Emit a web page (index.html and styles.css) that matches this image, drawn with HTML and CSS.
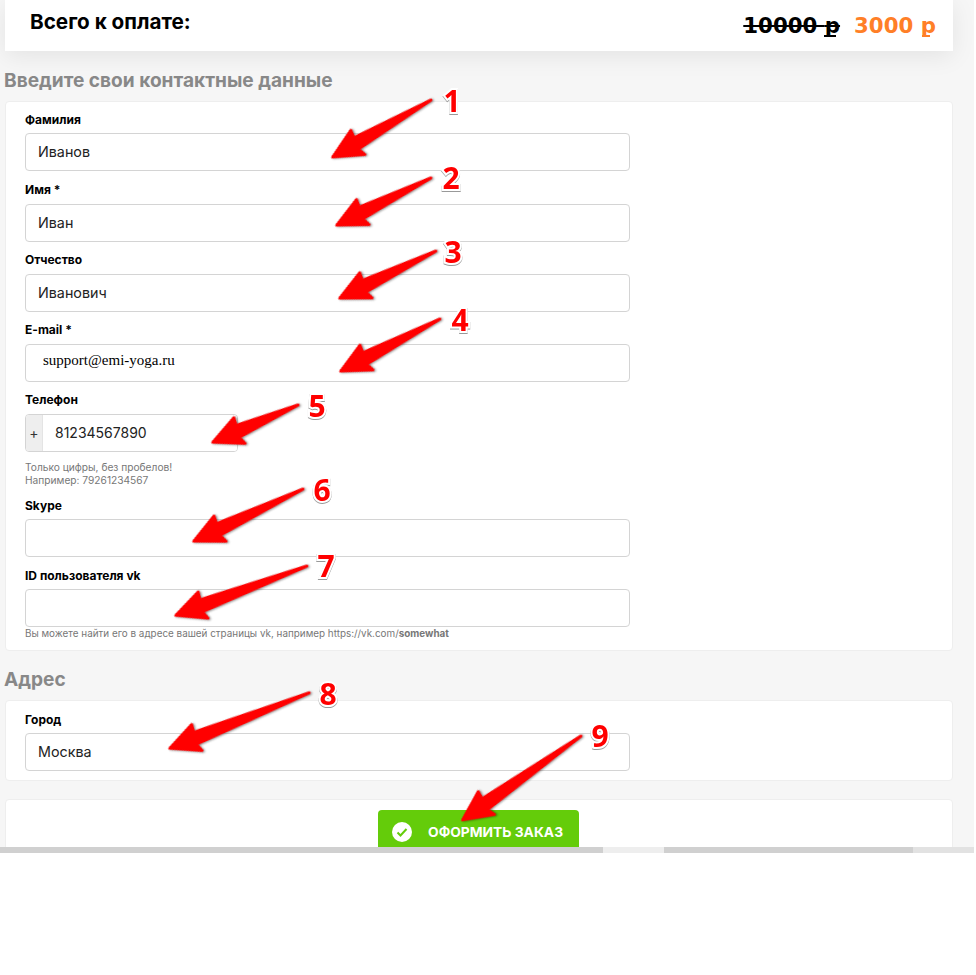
FILE: index.html
```html
<!DOCTYPE html>
<html>
<head lang="ru">
    <meta charset="UTF-8">
    <title>Оформление заказа</title>
    <link rel="stylesheet" href="styles.css">
</head>
<body>
<div class="page">
    <div class="total">
        <div class="total-title">Всего к оплате:</div>
        <div class="total-prices">
            <span class="price-old">10000 <span class="rub">р</span></span>
            <span class="price-new">3000 <span class="rub">р</span></span>
        </div>
    </div>

    <h2 class="section-title">Введите свои контактные данные</h2>
    <div class="card contacts">
        <div class="field">
            <label class="field-label">Фамилия</label>
            <input class="field-input" type="text" value="Иванов">
        </div>
        <div class="field field-tall">
            <label class="field-label">Имя *</label>
            <input class="field-input" type="text" value="Иван">
        </div>
        <div class="field field-tall">
            <label class="field-label">Отчество</label>
            <input class="field-input" type="text" value="Иванович">
        </div>
        <div class="field field-tall">
            <label class="field-label">E-mail *</label>
            <input class="field-input field-input-email" type="text" value="support@emi-yoga.ru">
        </div>
        <div class="field field-tall">
            <label class="field-label">Телефон</label>
            <div class="phone">
                <span class="phone-plus">+</span>
                <input class="phone-input" type="text" value="81234567890">
            </div>
            <p class="hint hint-phone">Только цифры, без пробелов!<br>Например: 79261234567</p>
        </div>
        <div class="field">
            <label class="field-label">Skype</label>
            <input class="field-input" type="text">
        </div>
        <div class="field">
            <label class="field-label">ID пользователя vk</label>
            <input class="field-input" type="text">
            <p class="hint">Вы можете найти его в адресе вашей страницы vk, например https://vk.com/<b>somewhat</b></p>
        </div>
    </div>

    <h2 class="section-title">Адрес</h2>
    <div class="card address">
        <div class="field">
            <label class="field-label">Город</label>
            <input class="field-input" type="text" value="Москва">
        </div>
    </div>

    <div class="card submit">
        <button class="order-btn" type="button">
            <svg class="order-icon" width="20" height="20" viewBox="0 0 20 20">
                <circle cx="10" cy="10" r="10" fill="#fff"/>
                <path d="M5.5 10.5l3 3 6-6.5" fill="none" stroke="#64cc0a" stroke-width="2"/>
            </svg>
            ОФОРМИТЬ ЗАКАЗ
        </button>
    </div>

    <!-- arrows and numbers drawn on top of the form -->
    <svg class="marks" width="974" height="847" viewBox="0 0 974 847">
        <g class="arrows">
            <path transform="translate(331 158) rotate(-30.1)" d="M2 0L31 -14L30 -6L115.6 0L28 6L31 14Z"/>
            <path transform="translate(335 226) rotate(-26.6)" d="M2 0L31 -14L30 -6L107.3 0L28 6L31 14Z"/>
            <path transform="translate(338 299) rotate(-26.1)" d="M2 0L31 -14L30 -6L109 0L28 6L31 14Z"/>
            <path transform="translate(339 372) rotate(-27.7)" d="M2 0L31 -14L30 -6L114 0L28 6L31 14Z"/>
            <path transform="translate(211 443) rotate(-23.6)" d="M2 0L31 -14L30 -6L95 0L28 6L31 14Z"/>
            <path transform="translate(192 542) rotate(-25.5)" d="M2 0L31 -14L30 -6L123 0L28 6L31 14Z"/>
            <path transform="translate(174 616) rotate(-20.6)" d="M2 0L31 -14L30 -6L142 0L28 6L31 14Z"/>
            <path transform="translate(168 749) rotate(-21.7)" d="M2 0L31 -14L30 -6L152 0L28 6L31 14Z"/>
            <path transform="translate(461 821) rotate(-35.3)" d="M2 0L31 -14L30 -6L147 0L28 6L31 14Z"/>
        </g>
        <g class="numbers">
            <text x="452" y="112">1</text>
            <text x="451" y="189">2</text>
            <text x="453" y="263">3</text>
            <text x="460" y="331">4</text>
            <text x="317" y="417">5</text>
            <text x="322" y="501">6</text>
            <text x="326" y="577">7</text>
            <text x="328" y="705">8</text>
            <text x="600" y="747">9</text>
        </g>
    </svg>
</div>

<div class="scrollbar">
    <span class="bar-a"></span>
    <span class="bar-b"></span>
    <span class="bar-c"></span>
    <span class="bar-d"></span>
</div>
</body>
</html>
```

FILE: styles.css
```css
* {
    padding: 0;
    margin: 0;
    box-sizing: border-box;
}

body {
    background-color: #fff;
    font-family: Inter, "Noto Sans", sans-serif;
    color: #000;
}

.page {
    position: relative;
    width: 974px;
    height: 847px;
    overflow: hidden;
    background-color: #f6f6f6;
}

.total {
    display: flex;
    justify-content: space-between;
    width: 948px;
    height: 51px;
    margin-left: 5px;
    margin-bottom: 1px;
    padding: 10px 17px 0 25px;
    background-color: #fff;
    box-shadow: 0 5px 25px rgba(0, 0, 0, .08);
}

.total-title {
    font-size: 20.7px;
    font-weight: 700;
    line-height: 24px;
}

.total-prices {
    display: flex;
    gap: 14px;
    font-family: "DejaVu Sans", sans-serif;
    font-size: 21.3px;
    font-weight: 700;
    line-height: 31px;
}

.price-old {
    text-decoration: line-through;
}

.price-new {
    color: #ff7f27;
}

.rub {
    position: relative;
}

/* short bar under the rouble letter */
.rub::after {
    content: "";
    position: absolute;
    left: -1px;
    bottom: 1px;
    width: 12px;
    height: 2px;
    background-color: #000;
}

.price-new .rub::after {
    left: 1px;
    width: 8px;
    background-color: #ff7f27;
}

.section-title {
    height: 49px;
    padding: 16px 0 0 4px;
    font-size: 19.1px;
    font-weight: 700;
    line-height: 24px;
    color: #888;
}

.card {
    width: 948px;
    margin-left: 5px;
    background-color: #fff;
    border: 1px solid #eee;
    border-radius: 4px;
}

.contacts {
    height: 550px;
    padding: 8px 19px 0;
}

.address {
    height: 81px;
    margin-bottom: 18px;
    padding: 9px 19px 0;
}

.submit {
    display: flex;
    justify-content: center;
    height: 80px;
    padding: 10px 1px 0 0;
}

.field {
    margin-bottom: 9px;
}

.field-tall {
    margin-bottom: 8px;
}

.field-label {
    display: block;
    height: 23px;
    font-size: 12px;
    font-weight: 700;
    line-height: 20px;
}

.field-tall .field-label {
    height: 24px;
}

.field-input {
    display: block;
    width: 605px;
    height: 38px;
    padding: 0 12px 1px;
    border: 1px solid #d4d4d4;
    border-radius: 4px;
    background-color: #fff;
    font-family: inherit;
    font-size: 14.3px;
    color: #222;
    outline: none;
}

.field-input-email {
    padding: 0 12px 5px 17px;
    font-family: "Liberation Serif", serif;
    font-size: 15px;
    color: #000;
}

.phone {
    display: flex;
    width: 213px;
    height: 38px;
    border: 1px solid #d4d4d4;
    border-radius: 4px;
    overflow: hidden;
}

.phone-plus {
    width: 16px;
    background-color: #eee;
    font-size: 14px;
    line-height: 36px;
    text-align: center;
    color: #333;
}

.phone-input {
    flex: 1;
    min-width: 0;
    padding: 0 12px 1px;
    border: 0;
    border-left: 1px solid #e4e4e4;
    font-family: inherit;
    font-size: 14px;
    color: #222;
    outline: none;
}

.hint {
    font-size: 9.9px;
    line-height: 13px;
    color: #777;
}

.hint-phone {
    margin-bottom: 9px;
    padding-top: 9px;
    font-size: 10.2px;
}

.order-btn {
    display: flex;
    align-items: center;
    gap: 16px;
    width: 201px;
    height: 44px;
    padding-left: 14px;
    border: 0;
    border-radius: 4px;
    background-color: #64cc0a;
    font-family: inherit;
    font-size: 13.8px;
    font-weight: 700;
    color: #fff;
}

.order-icon {
    flex: none;
}

.marks {
    position: absolute;
    left: 0;
    top: 0;
}

.arrows path {
    fill: #f00;
    stroke: #f00;
    stroke-width: 3;
    stroke-linejoin: round;
    filter: drop-shadow(1px 1px 1px rgba(0, 0, 0, .45));
}

.numbers text {
    font-family: "Open Sans", sans-serif;
    font-size: 30px;
    font-weight: 700;
    text-anchor: middle;
    fill: #f00;
    stroke: #fff;
    stroke-width: 4;
    paint-order: stroke;
    filter: drop-shadow(0 1px 0 rgba(0, 0, 0, .4));
}

.scrollbar {
    display: flex;
    width: 974px;
    height: 6px;
}

.bar-a {
    width: 603px;
    background-color: #d0d0d0;
}

.bar-b {
    width: 61px;
    background-color: #eee;
}

.bar-c {
    width: 249px;
    background-color: #d0d0d0;
}

.bar-d {
    width: 61px;
    background-color: #e2e2e2;
}
```
